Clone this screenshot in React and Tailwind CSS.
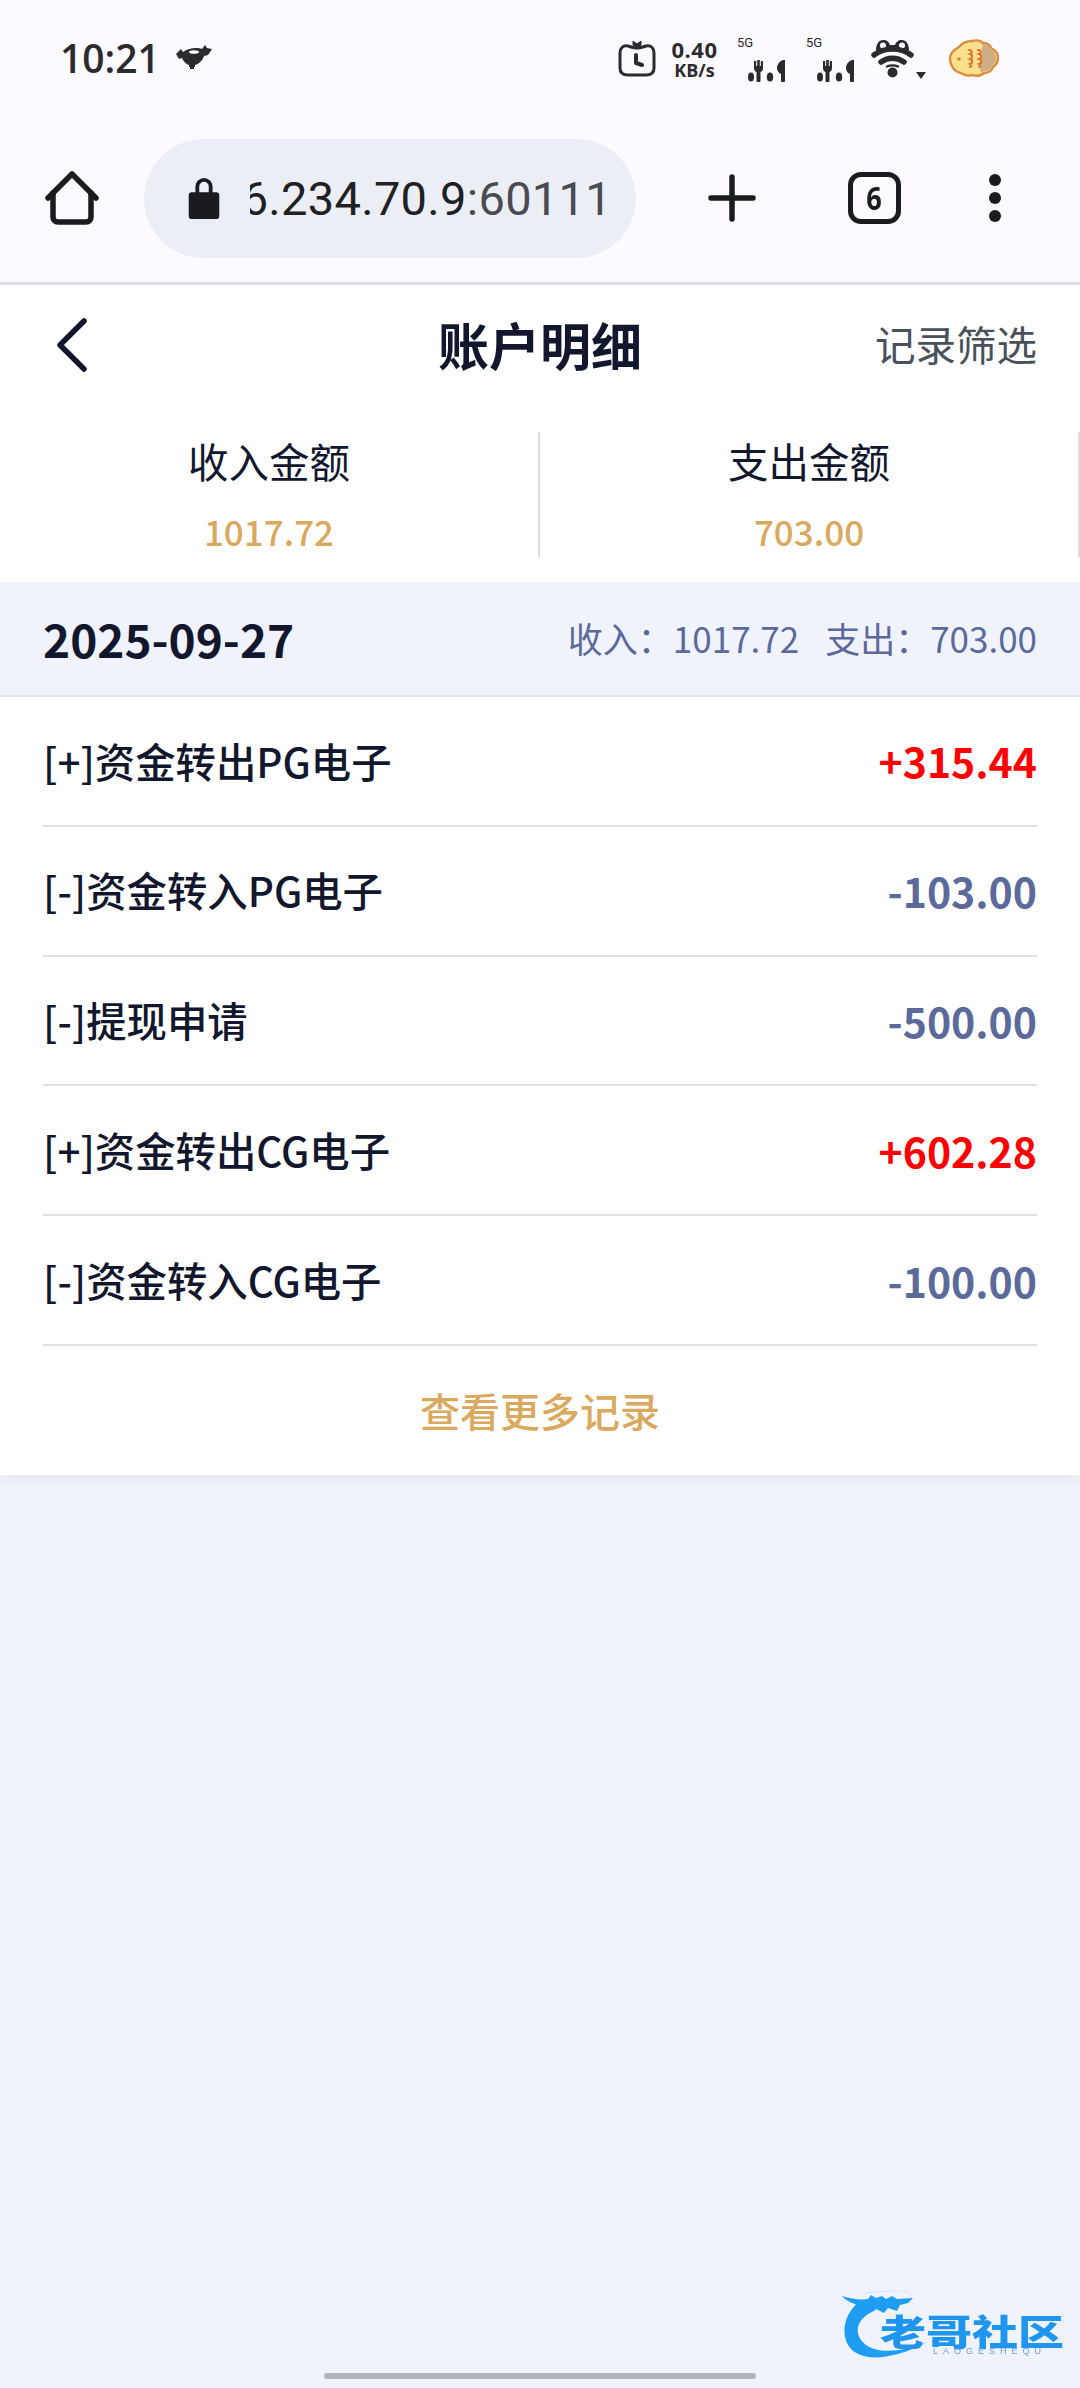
const cjk = 'font-["Noto_Sans_CJK_SC","Noto_Sans",sans-serif]'

const records = [
  { label: '[+]资金转出PG电子', amount: '+315.44', income: true },
  { label: '[-]资金转入PG电子', amount: '-103.00' },
  { label: '[-]提现申请', amount: '-500.00' },
  { label: '[+]资金转出CG电子', amount: '+602.28', income: true },
  { label: '[-]资金转入CG电子', amount: '-100.00' },
]

function TimerIcon() {
  return (
    <svg width="38" height="37" viewBox="0 0 38 37" fill="none" stroke="#2b2b2e">
      <path d="M10 6C5 5 2 8 2 13v15c0 5 3 7 8 7h18c5 0 8-2 8-7V13c0-5-3-8-8-7-3 1-6 2-9 2s-6-1-9-2Z" strokeWidth="3" />
      <path d="M15 1l4 3 4-3v4l-4 3-4-3Z" fill="#2b2b2e" strokeWidth="1" />
      <path d="M18 15v8l6 2" strokeWidth="4" strokeLinecap="round" strokeLinejoin="round" />
    </svg>
  )
}

function SignalIcon() {
  return (
    <svg width="37" height="22" viewBox="0 0 37 22" fill="#2b2b2e">
      <ellipse cx="3" cy="17" rx="3" ry="4.500" />
      <path d="M6 1h2.200v5h1V0h2.600v6h1V1H15v7c0 2-1 3.500-2.500 4v9c0 .5-.5 1-1 1h-2c-.5 0-1-.5-1-1v-9C7 11.500 6 10 6 8Z" />
      <ellipse cx="22" cy="17" rx="3.200" ry="4.500" />
      <path d="M29 8c0-4 3-7 6-8h2v21c0 .5-.5 1-1 1h-2c-.5 0-1-.5-1-1v-7c-2-.5-4-3-4-6Z" />
    </svg>
  )
}

function WifiIcon() {
  return (
    <svg width="43" height="39" viewBox="0 0 43 39" fill="none" stroke="#2b2b2e" strokeLinecap="round">
      <path d="M5 11c0-6 3-10 7-10s6 2 7 5h5c1-3 3-5 7-5s7 4 7 10Z" fill="#2b2b2e" stroke="none" />
      <circle cx="12" cy="6.500" r="3" fill="#fdfaff" stroke="none" />
      <circle cx="31" cy="6.500" r="3" fill="#fdfaff" stroke="none" />
      <path d="M3 16c11-8 26-8 37 0" strokeWidth="5.500" />
      <path d="M10 23c7-5 16-5 23 0" strokeWidth="5.500" />
      <path d="M16 27.500c3-1.500 8-1.500 11 0" strokeWidth="2.500" />
      <circle cx="21.500" cy="33.500" r="5" fill="#2b2b2e" stroke="none" />
    </svg>
  )
}

function CookieIcon() {
  return (
    <svg width="52" height="39" viewBox="0 0 52 39">
      <path d="M2 20c0-6 5-10 9-12 3-4 8-6 13-6 3-1 8-1 11 2 4 0 7 2 8 5 4 2 7 6 7 10 0 4-2 7-5 9-1 4-5 6-9 6-3 3-9 3-13 2-3 1-7 0-10-2C6 33 2 26 2 20Z" fill="#fbe08e" stroke="#d98d45" strokeWidth="2.500" />
      <path d="M35 5c3 0 7 1 7 5 4 2 6 5 6 9 0 4-2 6-4 8-1 4-5 5-8 5-1 1-2 1-3 1-2-3-1-8 0-11 2-6 0-11 2-17Z" fill="#cfad84" />
      <circle cx="11" cy="20" r="1.800" fill="#d9822f" />
      <path d="M21 11c3 0 4 3 1 4 3 1 3 4 0 5 3 1 3 4 0 5 2 1 2 2 0 3M30 11c3 0 4 3 1 4 3 1 3 4 0 5 3 1 3 4 0 5 2 1 2 2 0 3" fill="none" stroke="#d9742f" strokeWidth="2" strokeLinecap="round" />
    </svg>
  )
}

function StatusBar() {
  return (
    <div className="flex items-center justify-between h-[120px] pb-[3px] pl-[60px] pr-[80px]">
      <div className="flex items-center gap-[16px] mb-[3px]">
        <span className='font-["Open_Sans",sans-serif] font-semibold text-[39px] leading-none text-[#2b2b2e]'>10:21</span>
        <svg width="36" height="28" viewBox="0 0 36 28" fill="#2b2b2e">
          <path d="M0 11l5-5 2 3c5-4 14-5 19-3l3-4 2 3 5 1-4 6-4 1c-1 4-5 8-9 9v2h-1v2h-4v-2h-1v-2c-3-1-6-4-7-7l-3 1Z" />
          <ellipse cx="18" cy="9" rx="5" ry="1.800" fill="#fdfaff" />
        </svg>
      </div>
      <div className="flex items-center">
        <TimerIcon />
        <div className='ml-[14px] w-[49px] flex flex-col items-center font-["Open_Sans",sans-serif] font-bold text-[#2b2b2e]'>
          <span className="text-[22px] leading-[22px] tracking-[0.5px]">0.40</span>
          <span className="text-[18px] leading-[20px]">KB/s</span>
        </div>
        <div className='ml-[18px] w-[48px] h-[46px] flex flex-col font-["Roboto",sans-serif] text-[#2b2b2e]'>
          <span className="text-[13px] leading-[14px]">5G</span>
          <div className="ml-[11px] mt-[10px]"><SignalIcon /></div>
        </div>
        <div className='ml-[21px] w-[48px] h-[46px] flex flex-col font-["Roboto",sans-serif] text-[#2b2b2e]'>
          <span className="text-[13px] leading-[14px]">5G</span>
          <div className="ml-[11px] mt-[10px]"><SignalIcon /></div>
        </div>
        <div className="relative ml-[17px]">
          <WifiIcon />
          <span className="absolute left-[45px] bottom-[-1px] w-0 h-0 border-x-[5px] border-x-transparent border-t-[7px] border-t-[#2b2b2e]" />
        </div>
        <div className="ml-[34px]"><CookieIcon /></div>
      </div>
    </div>
  )
}

function BrowserBar() {
  return (
    <div className="flex items-center h-[162px] pb-[6px]">
      <svg className="ml-[45px] shrink-0" width="54" height="54" viewBox="0 0 54 54" fill="none" stroke="#1a1b20" strokeWidth="5.500" strokeLinecap="round" strokeLinejoin="round">
        <path d="M3 27L27 3l24 24" />
        <path d="M8 22v24c0 3 2 5 5 5h28c3 0 5-2 5-5V22" />
      </svg>
      <div className="ml-[45px] w-[492px] h-[119px] shrink-0 rounded-full bg-[#eceef6] flex items-center pl-[44px] overflow-hidden">
        <svg className="shrink-0" width="32" height="42" viewBox="0 0 32 44" fill="#1a1b20">
          <path d="M3 16h4V10a9 9 0 0 1 18 0v6h4c1.700 0 3 1.300 3 3v22c0 1.700-1.300 3-3 3H3c-1.700 0-3-1.300-3-3V19c0-1.700 1.300-3 3-3Zm8 0h10V10a5 5 0 0 0-10 0Z" />
        </svg>
        <div className='ml-[30px] w-[362px] overflow-hidden flex justify-end whitespace-nowrap font-["Roboto",sans-serif] text-[47px] leading-none tracking-[0.3px]'>
          <span className="text-[#1f2024]">6.234.70.9</span>
          <span className="text-[#4a4b52]">:60111</span>
        </div>
      </div>
      <svg className="ml-[72px] shrink-0" width="48" height="48" viewBox="0 0 48 48" fill="none" stroke="#1a1b20" strokeWidth="5.500" strokeLinecap="round">
        <path d="M24 3v42M3 24h42" />
      </svg>
      <div className='ml-[92px] w-[53px] h-[52px] shrink-0 rounded-[13px] border-[5px] border-[#1a1b20] flex items-center justify-center font-["Open_Sans",sans-serif] font-bold text-[32px] leading-none text-[#1a1b20]'>
        <span className="scale-x-[0.85]">6</span>
      </div>
      <div className="ml-[88px] flex flex-col gap-[6px] shrink-0">
        <span className="w-[12px] h-[12px] rounded-full bg-[#1a1b20]" />
        <span className="w-[12px] h-[12px] rounded-full bg-[#1a1b20]" />
        <span className="w-[12px] h-[12px] rounded-full bg-[#1a1b20]" />
      </div>
    </div>
  )
}

export default function App() {
  return (
    <div className={`relative w-[1080px] h-[2388px] overflow-hidden bg-[#f0f3fc] ${cjk}`}>
      <div className="bg-[#fdfaff] border-b-[3px] border-[#dfe0e6]">
        <StatusBar />
        <BrowserBar />
      </div>

      <div className="bg-white shadow-[0_4px_12px_rgba(0,0,0,0.05)]">
        {/* header */}
        <div className="relative flex items-center justify-between h-[127px] pb-[8px] pl-[56px] pr-[43px]">
          <svg width="32" height="54" viewBox="0 0 32 54" fill="none" stroke="#12172e" strokeWidth="5.500" strokeLinecap="round" strokeLinejoin="round">
            <path d="M28 3L4 27l24 24" />
          </svg>
          <span className="absolute left-0 right-0 text-center font-bold text-[51px] leading-none text-[#12172e] pointer-events-none">账户明细</span>
          <span className="text-[40.5px] leading-none text-[#4a4f5c]">记录筛选</span>
        </div>

        {/* totals */}
        <div className="flex pt-[20px] pb-[25px]">
          <div className="w-[540px] h-[125px] border-r-2 border-[#dcdcdc] flex flex-col items-center">
            <span className="text-[40.5px] leading-[46px] mt-[6px] text-[#12172e]">收入金额</span>
            <span className="text-[35px] leading-[40px] mt-[27px] font-medium text-[#d9a95f]">1017.72</span>
          </div>
          <div className="w-[540px] h-[125px] border-r-2 border-[#dcdcdc] flex flex-col items-center">
            <span className="text-[40.5px] leading-[46px] mt-[6px] text-[#12172e]">支出金额</span>
            <span className="text-[35px] leading-[40px] mt-[27px] font-medium text-[#d9a95f]">703.00</span>
          </div>
        </div>

        {/* date group */}
        <div className="flex items-center justify-between h-[115px] pb-[2px] px-[43px] bg-[#f0f3fc] border-b-2 border-[#e2e2e8]">
          <span className="font-bold text-[46px] leading-none text-[#12172e]">2025-09-27</span>
          <div className="flex text-[35px] leading-none text-[#5b6a9a] whitespace-nowrap">
            <span>收入：1017.72</span>
            <span className="ml-[26px]">支出：703.00</span>
          </div>
        </div>

        {/* records */}
        <div className="px-[43px]">
          {records.map((r) => (
            <div key={r.amount} className="flex items-center justify-between h-[129.8px] border-b-2 border-[#e0e0e0]">
              <span className="font-medium text-[40.4px] leading-none text-[#12172e]">{r.label}</span>
              <span className={`font-bold text-[41px] leading-none ${r.income ? 'text-[#ff0000]' : 'text-[#5b6a9a]'}`}>{r.amount}</span>
            </div>
          ))}
        </div>
        <div className="h-[129px] flex items-center justify-center font-medium text-[40px] text-[#d9a95f]">查看更多记录</div>
      </div>

      {/* watermark */}
      <div className="absolute left-[842px] top-[2290px] w-[225px] h-[72px] blur-[0.7px]">
        <svg className="absolute left-0 top-0" width="110" height="72" viewBox="0 0 110 72" fill="none">
          <path d="M18 11C4 22-2 40 6 55c9 15 36 19 80 -3-26 10-50 12-62 3C10 44 14 28 34 20Z" fill="#1f9df2" />
          <path d="M0 6c10 3 18 4 26 3l3-4 5 3 6-2 4 3 6-3 5 3 16-1-5 5-8 2-3 6-9-3-4 5-8-4-8 2-8-5C12 14 4 11 0 6Z" fill="#1f9df2" />
          <path d="M22 4c10-3 24-3 38-3M62 1c4 1 6 3 7 5" stroke="#d5e3f6" strokeWidth="1" />
        </svg>
        <span className="absolute left-[38px] top-[20px] w-[184px] scale-y-[0.78] font-black text-[46px] leading-[40px] text-[#1f95ee] whitespace-nowrap">老哥社区</span>
        <span className='absolute left-[91px] top-[57px] font-["Liberation_Sans",sans-serif] text-[9px] leading-[9px] tracking-[5px] text-[#6f9cd0] whitespace-nowrap'>LAOGESHEQU</span>
      </div>

      {/* gesture bar */}
      <div className="absolute left-[324px] top-[2373px] w-[432px] h-[6px] rounded-full bg-[#b4b4bc]" />
    </div>
  )
}
